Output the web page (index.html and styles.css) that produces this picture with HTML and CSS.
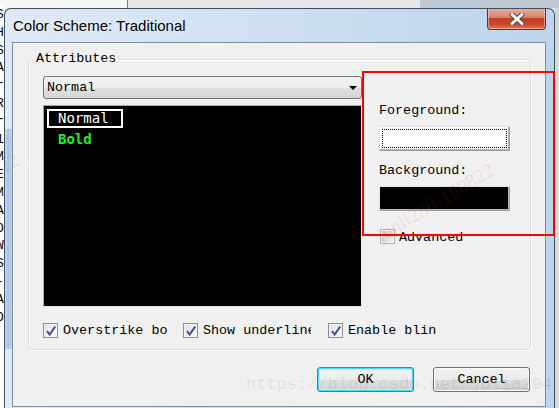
FILE: index.html
```html
<!DOCTYPE html>
<html lang="en">
<head>
  <meta charset="UTF-8">
  <title>Color Scheme: Traditional</title>
  <link rel="stylesheet" href="styles.css">
</head>
<body>
  <div class="desk">
    <div class="desk-left">
      <span>S</span><span>H</span><span>S</span><span>A</span><span>r</span><span>R</span><span>r</span><span>1</span><span>M</span><span>E</span><span>M</span><span>A</span><span>O</span><span>W</span><span>S</span><span>-</span><span>A</span><span>O</span>
    </div>

    <div class="window">
      <div class="titlebar">
        <span class="title">Color Scheme: Traditional</span>
        <button class="close" aria-label="Close">
          <svg width="16" height="12" viewBox="0 0 16 12">
            <path d="M3 1.5 L13 10.5 M13 1.5 L3 10.5" stroke="#4a4a4a" stroke-width="5" stroke-linecap="round" fill="none"/>
            <path d="M3 1.5 L13 10.5 M13 1.5 L3 10.5" stroke="#fff" stroke-width="3" stroke-linecap="round" fill="none"/>
          </svg>
        </button>
      </div>

      <div class="client">
        <fieldset class="group">
          <legend>Attributes</legend>
          <div class="group-body">
            <div class="left-col">
              <div class="combo">
                <span>Normal</span>
                <span class="arrow"></span>
              </div>
              <div class="list">
                <div class="item selected">Normal</div>
                <div class="item bold">Bold</div>
              </div>
            </div>
            <div class="right-col">
              <div class="lbl">Foreground:</div>
              <div class="swatch fg"></div>
              <div class="lbl gap">Background:</div>
              <div class="swatch bg"></div>
              <div class="check advanced">
                <span class="box disabled"></span>
                <span class="text">Advanced</span>
              </div>
            </div>
          </div>
          <div class="checks">
            <div class="check c1">
              <span class="box"><svg width="12" height="12" viewBox="0 0 12 12"><path d="M2 6 L4.6 9.6 L10.2 1.6" stroke="#3f5394" stroke-width="2" fill="none"/></svg></span>
              <span class="text">Overstrike bold</span>
            </div>
            <div class="check c2">
              <span class="box"><svg width="12" height="12" viewBox="0 0 12 12"><path d="M2 6 L4.6 9.6 L10.2 1.6" stroke="#3f5394" stroke-width="2" fill="none"/></svg></span>
              <span class="text">Show underline</span>
            </div>
            <div class="check c3">
              <span class="box"><svg width="12" height="12" viewBox="0 0 12 12"><path d="M2 6 L4.6 9.6 L10.2 1.6" stroke="#3f5394" stroke-width="2" fill="none"/></svg></span>
              <span class="text">Enable blinking</span>
            </div>
          </div>
        </fieldset>

        <div class="actions">
          <button class="btn default">OK</button>
          <button class="btn">Cancel</button>
        </div>
      </div>
    </div>

    <div class="desk-right"></div>
  </div>

  <!-- annotation + watermarks drawn over the screenshot -->
  <div class="note"></div>
  <div class="wm wm-a">junli280-180822</div>
  <div class="wm wm-b">junli280-180822</div>
  <div class="wm-url">https://blog.csdn.net/julia294</div>
</body>
</html>
```

FILE: styles.css
```css
body {
  margin: 0;
  width: 559px;
  height: 408px;
  overflow: hidden;
  position: relative;
  font-family: 'Liberation Mono', 'DejaVu Sans Mono', monospace;
  font-size: 13.4px;
  color: #000;
  background:
    linear-gradient(to right, #f6f6f6 0 127px, #7a7a7a 127px 128px, #e8e8e8 128px 420px, #bfc9d4 420px) 0 0 / 100% 8px no-repeat,
    #e4e4e4;
}
.desk {
  display: flex;
  height: 408px;
}
.desk-left {
  width: 4px;
  margin-top: 6px;
  overflow: hidden;
  background: #fff;
  display: flex;
  flex-direction: column;
  font-family: 'Liberation Mono', monospace;
  font-size: 13px;
  line-height: 17.8px;
}
.desk-left span {
  margin-left: -4px;
}
.desk-right {
  flex: 1;
  margin-top: 8px;
  background: linear-gradient(#cfd3d8, #dcdcdc 20%, #d9d9d9);
}

/* window frame */
.window {
  width: 551px;
  height: 400px;
  margin-top: 8px;
  box-sizing: border-box;
  border: 1px solid #3f4f60;
  border-bottom: none;
  border-radius: 7px 7px 0 0;
  padding: 0 8px 0 7px;
  background:
    linear-gradient(to right, #c4d8ee, #a9c4e2 40%, #c4d8ee) 0 120px / 8px 220px no-repeat,
    linear-gradient(to right, #dfeaf6, #cfe0f2 45%, #bcd4ed);
  display: flex;
  flex-direction: column;
  overflow: hidden;
}
.titlebar {
  height: 33px;
  flex: none;
  display: flex;
  align-items: flex-start;
  justify-content: space-between;
}
.title {
  margin-top: 8px;
  padding-left: 1px;
  font-family: 'Liberation Sans', Arial, sans-serif;
  font-size: 15px;
  line-height: 18px;
  color: #000;
  text-shadow: 0 0 6px rgba(255, 255, 255, 0.9);
}
.close {
  width: 59px;
  height: 22px;
  margin-top: -1px;
  padding: 0;
  border: 1px solid #6b2d22;
  border-top: none;
  border-radius: 0 0 4px 4px;
  background: linear-gradient(#e9b2a5, #d9826c 45%, #c33c23 50%, #cc4a2e 80%, #e07a5a);
  box-shadow: inset 0 0 0 1px rgba(255, 220, 210, 0.5);
  display: flex;
  align-items: center;
  justify-content: center;
}

/* client area */
.client {
  height: 365px;
  flex: none;
  box-sizing: border-box;
  border: 1px solid #7f8e9c;
  background: #f0f0f0;
  display: flex;
  flex-direction: column;
}
.group {
  width: 503px;
  box-sizing: border-box;
  margin: 8px 0 0 15px;
  padding: 9px 14px 11px 14px;
  border: 1px solid #d5dfe5;
  border-radius: 3px;
  box-shadow: inset 1px 1px 0 #fff, 1px 1px 0 #fff;
}
.group legend {
  margin-left: -9px;
  padding: 0 2px;
  line-height: 16px;
}
.group-body {
  display: flex;
}
.left-col {
  width: 319px;
  flex: none;
}
.combo {
  height: 23px;
  box-sizing: border-box;
  border: 1px solid #707070;
  border-radius: 3px;
  background: linear-gradient(#f3f3f3, #ececec 50%, #e0e0e0 51%, #d6d6d6);
  display: flex;
  align-items: center;
  justify-content: space-between;
  padding: 0 4px 0 3px;
}
.arrow {
  width: 0;
  height: 0;
  border-left: 4px solid transparent;
  border-right: 4px solid transparent;
  border-top: 4px solid #000;
}
.list {
  height: 202px;
  margin-top: 6px;
  box-sizing: border-box;
  border: 1px solid #a9a9a9;
  border-right-color: #e3e3e3;
  border-bottom-color: #e3e3e3;
  background: #000;
  padding: 3px 0 0 3px;
  font-family: 'DejaVu Sans Mono', monospace;
  font-size: 14px;
}
.item {
  line-height: 15px;
  padding-left: 11px;
}
.item.selected {
  width: 76px;
  height: 19px;
  box-sizing: border-box;
  border: 2px solid #fff;
  padding-left: 9px;
  color: #fff;
}
.item.bold {
  margin-top: 4px;
  color: #22ee22;
  font-weight: bold;
}
.right-col {
  flex: 1;
  padding: 27px 0 0 17px;
}
.lbl {
  line-height: 16px;
}
.lbl.gap {
  margin-top: 12px;
}
.swatch {
  width: 131px;
  height: 25px;
  margin-top: 7px;
  box-sizing: border-box;
  border: 1px solid;
  border-color: #e3e3e3 #a0a0a0 #a0a0a0 #e3e3e3;
  box-shadow: inset -1px -1px 0 #b4b4b4;
}
.swatch.fg {
  background: #fff;
  outline: 1px dotted #000;
  outline-offset: -4px;
}
.swatch.bg {
  background: #000;
}

/* checkboxes */
.check {
  display: flex;
  align-items: center;
  gap: 5px;
  height: 15px;
}
.check .box {
  width: 13px;
  height: 13px;
  flex: none;
  border: 1px solid #8e8f8f;
  background: linear-gradient(135deg, #dedede, #fbfbfb);
  box-shadow: inset 0 0 0 1px #f4f4f4;
  display: flex;
  align-items: center;
  justify-content: center;
}
.check .box.disabled {
  border-color: #b1b1b1;
  background: linear-gradient(135deg, #c9c9c9, #f2f2f2);
}
.check .text {
  white-space: nowrap;
  overflow: hidden;
  line-height: 15px;
}
.check.advanced {
  margin-top: 18px;
  margin-left: 1px;
  gap: 4px;
}
.check.advanced .text {
  padding-top: 2px;
}
.checks {
  display: flex;
  margin-top: 16px;
}
.check.c1 { width: 140px; }
.check.c1 .text { width: 106px; }
.check.c2 { width: 145px; }
.check.c2 .text { width: 108px; }
.check.c3 .text { width: 89px; }

/* dialog buttons */
.actions {
  display: flex;
  justify-content: flex-end;
  gap: 19px;
  margin-top: 17px;
  padding-right: 15px;
}
.btn {
  width: 97px;
  height: 25px;
  padding: 0;
  border: 1px solid #707070;
  border-radius: 3px;
  background: linear-gradient(#f2f2f2, #ebebeb 50%, #dddddd 51%, #cfcfcf);
  box-shadow: inset 0 0 0 1px #fcfcfc;
  font-family: 'Liberation Mono', monospace;
  font-size: 13.4px;
  color: #000;
}
.btn.default {
  border-color: #3c7fb1;
  box-shadow: inset 0 0 0 1px #48d8fb, inset 0 0 0 2px #c4eefc;
  background: linear-gradient(#f4f4f4, #ececec 50%, #dfdfdf 51%, #d4d4d4);
}

/* red annotation box */
.note {
  position: absolute;
  left: 362px;
  top: 71px;
  width: 193px;
  height: 165px;
  box-sizing: border-box;
  border: 2px solid #f00;
}

/* watermarks */
.wm {
  position: absolute;
  font-family: 'Liberation Serif', serif;
  font-size: 20px;
  line-height: 20px;
  color: rgba(220, 50, 50, 0.13);
  transform: rotate(-31deg);
  transform-origin: 0 100%;
  white-space: nowrap;
}
.wm-a {
  left: 383px;
  top: 225px;
}
.wm-b {
  left: -92px;
  top: 215px;
}
.wm-url {
  position: absolute;
  left: 246px;
  top: 375px;
  font-family: 'Liberation Mono', monospace;
  font-size: 17px;
  line-height: 20px;
  color: rgba(0, 0, 0, 0.09);
  white-space: nowrap;
}
```
